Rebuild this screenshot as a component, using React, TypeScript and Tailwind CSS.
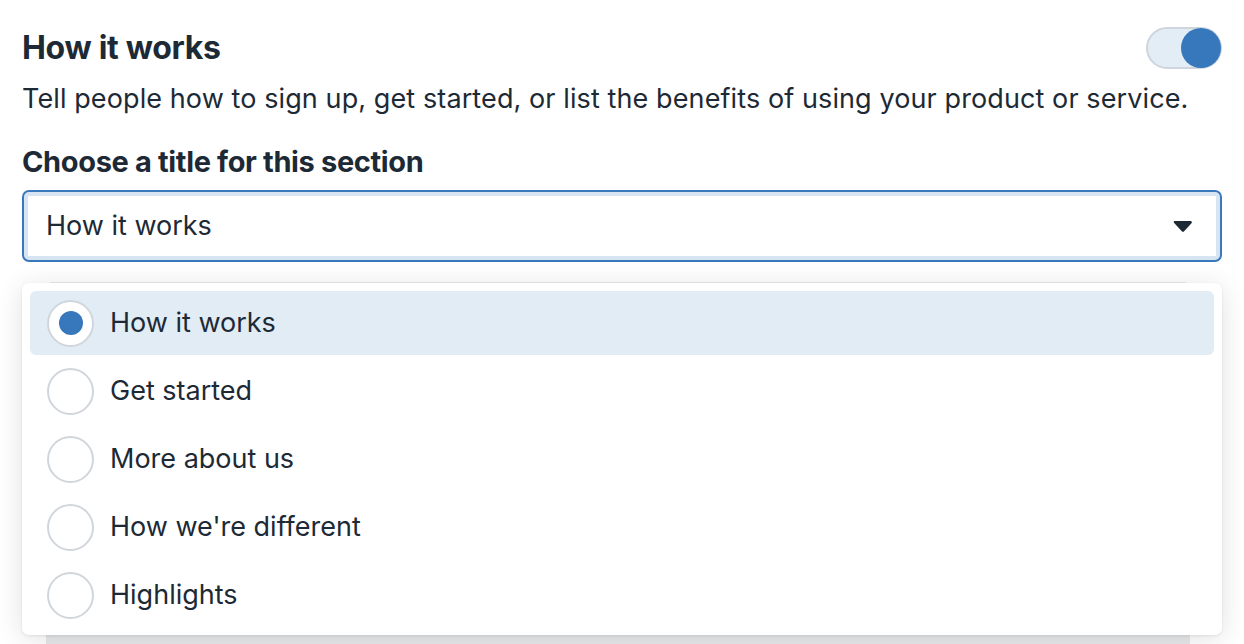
import { useState } from 'react'

const options = ['How it works', 'Get started', 'More about us', "How we're different", 'Highlights']

export default function App() {
  const [selected, setSelected] = useState(0)

  return (
    <div className="h-[644px] w-full overflow-hidden bg-white px-[22px] text-[#1d2a35] font-['Inter',sans-serif]">
      {/* header */}
      <div className="flex items-center justify-between pt-[27px]">
        <h2 className="text-[32px] font-bold leading-[42px] tracking-[-0.3px]">How it works</h2>
        <button className="relative h-[42px] w-[76px] rounded-full border-2 border-[#cfd5dc] bg-[#e3edf6]">
          <span className="absolute right-[-1px] top-[-1px] h-[40px] w-[40px] rounded-full bg-[#3777bc]" />
        </button>
      </div>
      <p className="mt-[16px] text-[27px] leading-[28px] tracking-[0.1px]">
        Tell people how to sign up, get started, or list the benefits of using your product or service.
      </p>

      <label className="mt-[34px] block text-[29px] font-bold leading-[30px] tracking-[-0.35px]">
        Choose a title for this section
      </label>

      <div className="mt-[13px] flex h-[72px] items-center justify-between rounded-[7px] border-2 border-[#3a78bd] bg-white pl-[22px] pr-[28px] shadow-[inset_0_0_0_4px_#d7e4f2]">
        <span className="pt-[1px] text-[27px]">{options[selected]}</span>
        <svg width="19" height="11" viewBox="0 0 19 11" fill="#1d2a35">
          <path d="M1.5 0h16c1.2 0 1.8 1.3 1 2.2l-7.4 8c-.6.7-1.7.7-2.3 0l-7.4-8C.6 1.3.3 0 1.5 0z" />
        </svg>
      </div>

      {/* content under the menu */}
      <div className="relative mt-[20px]">
        <div className="ml-[24px] mr-[32px] h-[400px] rounded-[6px] bg-[#e8e9eb]" />

        <div className="absolute left-0 right-0 top-[1px] rounded-[7px] bg-white p-[8px] shadow-[0_4px_28px_rgba(0,0,0,0.12),0_1px_3px_rgba(0,0,0,0.08)]">
          <div className="flex flex-col gap-[4px]">
            {options.map((opt, i) => {
              const active = i === selected
              return (
                <button
                  key={opt}
                  onClick={() => setSelected(i)}
                  className={`flex h-[64px] items-center gap-[16px] rounded-[6px] pl-[17px] text-left ${active ? 'bg-[#e2ecf5]' : 'bg-white'}`}
                >
                  <span className="flex h-[47px] w-[47px] items-center justify-center rounded-full border-2 border-[#d1d6dc] bg-white">
                    {active && <span className="h-[24px] w-[24px] rounded-full bg-[#3777bc]" />}
                  </span>
                  <span className="text-[27px]">{opt}</span>
                </button>
              )
            })}
          </div>
        </div>
      </div>
    </div>
  )
}
